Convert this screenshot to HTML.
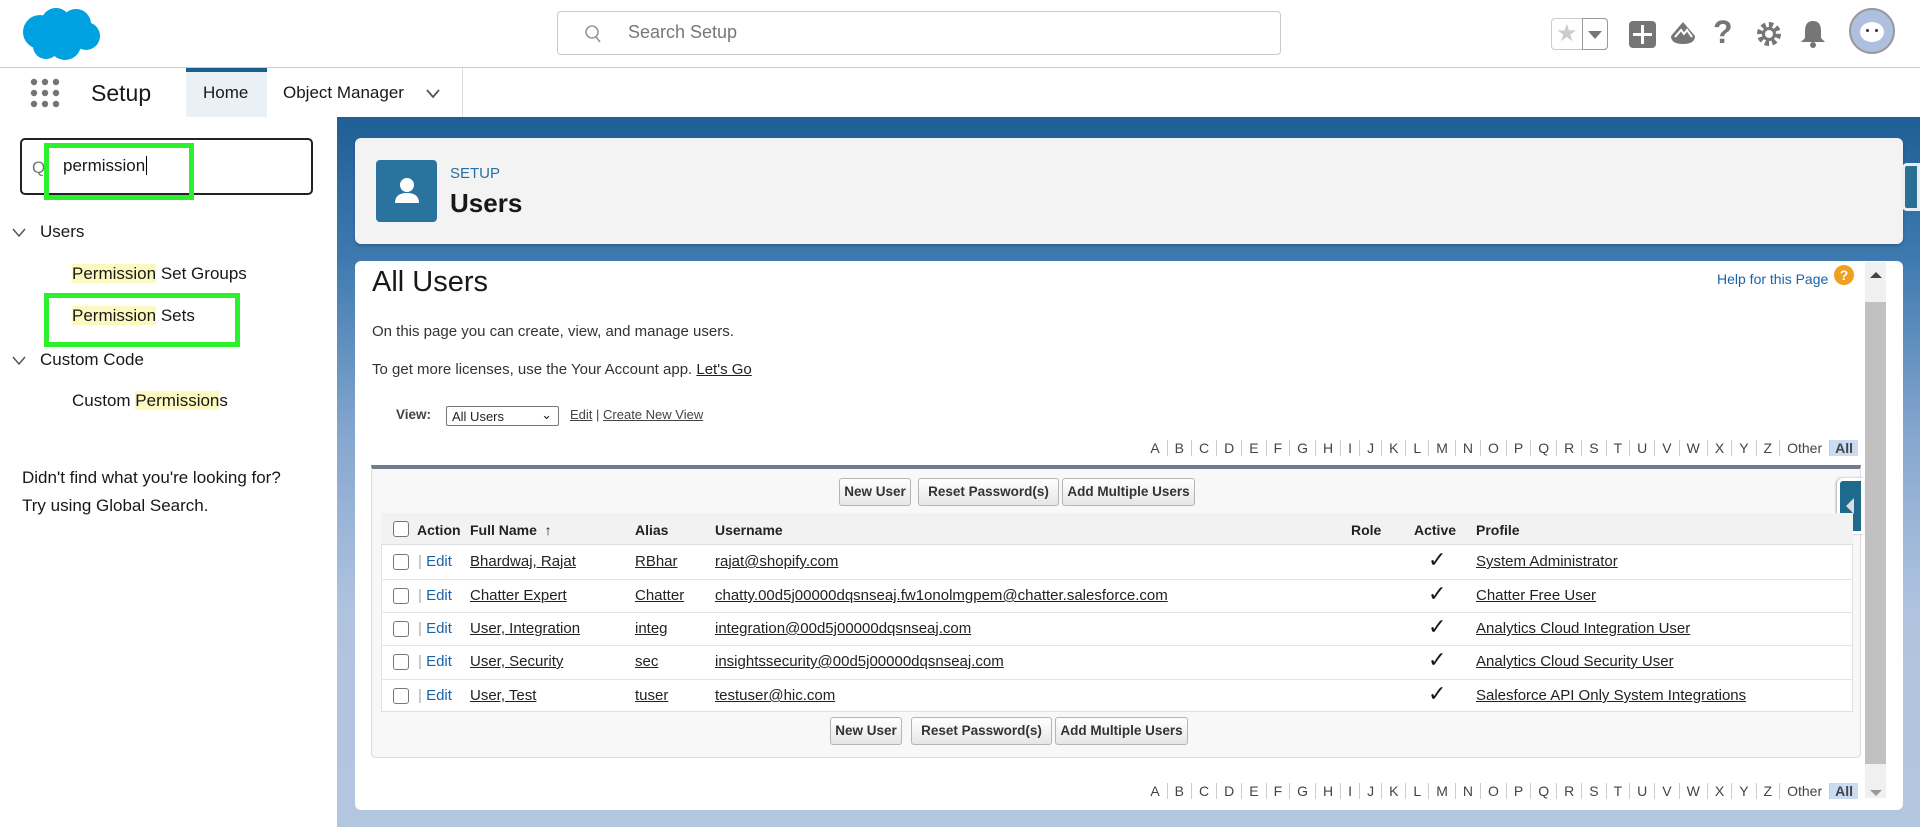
<!DOCTYPE html>
<html><head><meta charset="utf-8">
<style>
*{box-sizing:border-box;margin:0;padding:0}
body{width:1920px;height:827px;overflow:hidden;font-family:"Liberation Sans",Arial,sans-serif;background:#fff;position:relative;color:#181818}
.abs{position:absolute}
a{color:#222;text-decoration:underline}
.hl{background:#fcf9c0}
.bg{left:337px;top:117px;width:1583px;height:710px;background:linear-gradient(180deg,#1f5f96 0%,#3e7ab0 20%,#86a7cf 45%,#b0c4e0 70%,#b3c6e0 100%)}
.card{background:#fff;border-radius:6px}
.th{font-weight:bold;font-size:14px;color:#222}
.td{font-size:15px}
.btn{position:absolute;height:28px;border:1px solid #b5b5b5;border-radius:3px;background:linear-gradient(#fff,#e6e6e6);font-size:13.5px;font-weight:bold;color:#333;line-height:26px;text-align:center}
.cb{position:absolute;width:16px;height:16px;border:1px solid #777;border-radius:3px;background:#fff}
.alpha{font-size:14px;color:#444;white-space:nowrap}
.alpha span{padding:0 7px;border-right:1px solid #ccc}
.alpha span:last-child{border:none;padding:0 5px}
.edit{color:#1a62a8;text-decoration:none}
</style></head><body>
<svg class="abs" style="left:20px;top:6px" width="82" height="56" viewBox="0 0 82 56"><g fill="#00a1e0"><circle cx="20" cy="26" r="17"/><circle cx="36" cy="17" r="15"/><circle cx="56" cy="18" r="15"/><circle cx="66" cy="30" r="14"/><circle cx="45" cy="38" r="16"/><circle cx="26" cy="40" r="13"/></g></svg>
<div class="abs" style="left:557px;top:11px;width:724px;height:44px;border:1px solid #c9c9c9;border-radius:4px"></div>
<svg class="abs" style="left:584px;top:24px" width="18" height="20" viewBox="0 0 18 20"><circle cx="8" cy="8" r="6" fill="none" stroke="#999" stroke-width="1.6"/><line x1="12" y1="13" x2="16" y2="18" stroke="#999" stroke-width="1.8"/></svg>
<div class="abs" style="left:628px;top:22px;font-size:18px;color:#777">Search Setup</div>
<div class="abs" style="left:1551px;top:18px;width:57px;height:32px;border:1px solid #ccc;border-radius:4px"></div>
<div class="abs" style="left:1582px;top:18px;width:26px;height:32px;border:1px solid #999;border-radius:0 4px 4px 0"></div>
<div class="abs" style="left:1556px;top:19px;font-size:24px;color:#ccc">★</div>
<div class="abs" style="left:1588px;top:31px;width:0;height:0;border-left:7px solid transparent;border-right:7px solid transparent;border-top:8px solid #777"></div>
<div class="abs" style="left:1629px;top:21px;width:27px;height:27px;background:#767676;border-radius:4px"></div>
<div class="abs" style="left:1641px;top:25px;width:3px;height:19px;background:#fff"></div>
<div class="abs" style="left:1633px;top:33px;width:19px;height:3px;background:#fff"></div>
<svg class="abs" style="left:1669px;top:20px" width="28" height="28" viewBox="0 0 28 28"><path d="M14 2 L26 16 Q26 24 14 24 Q2 24 2 16 Z" fill="#767676"/><path d="M6 17 L12 10 L15 14 L18 10 L23 17" fill="none" stroke="#fff" stroke-width="2"/></svg>
<div class="abs" style="left:1713px;top:14px;font-size:32px;color:#767676;font-weight:bold">?</div>
<svg class="abs" style="left:1756px;top:21px" width="26" height="26" viewBox="0 0 26 26"><circle cx="13" cy="13" r="9" fill="none" stroke="#767676" stroke-width="6" stroke-dasharray="4 3"/><circle cx="13" cy="13" r="7" fill="#767676"/><circle cx="13" cy="13" r="4" fill="#fff"/></svg>
<svg class="abs" style="left:1799px;top:19px" width="28" height="30" viewBox="0 0 28 30"><path d="M14 2 Q6 2 6 12 L6 19 L2 23 L26 23 L22 19 L22 12 Q22 2 14 2Z" fill="#767676"/><circle cx="14" cy="26" r="3" fill="#767676"/></svg>
<div class="abs" style="left:1849px;top:8px;width:46px;height:46px;border-radius:50%;background:#aebfe0;border:2px solid #999"></div>
<div class="abs" style="left:1860px;top:22px;width:24px;height:20px;border-radius:50%;background:#fff"></div>
<div class="abs" style="left:1866px;top:29px;width:3px;height:3px;border-radius:50%;background:#333"></div>
<div class="abs" style="left:1875px;top:29px;width:3px;height:3px;border-radius:50%;background:#333"></div>
<div class="abs" style="left:0;top:67px;width:1920px;height:1px;background:#ccc"></div>
<svg class="abs" style="left:30px;top:78px" width="30" height="30"><g fill="#747474"><circle cx="4" cy="4" r="3.2"/><circle cx="15" cy="4" r="3.2"/><circle cx="26" cy="4" r="3.2"/><circle cx="4" cy="15" r="3.2"/><circle cx="15" cy="15" r="3.2"/><circle cx="26" cy="15" r="3.2"/><circle cx="4" cy="26" r="3.2"/><circle cx="15" cy="26" r="3.2"/><circle cx="26" cy="26" r="3.2"/></g></svg>
<div class="abs" style="left:91px;top:80px;font-size:23px;color:#181818">Setup</div>
<div class="abs" style="left:186px;top:68px;width:81px;height:49px;background:#eaf1f6;border-top:4px solid #1b5f8f"></div>
<div class="abs" style="left:203px;top:83px;font-size:17px">Home</div>
<div class="abs" style="left:283px;top:83px;font-size:17px">Object Manager</div>
<svg class="abs" style="left:425px;top:88px" width="16" height="12"><path d="M2 2 L8 9 L14 2" fill="none" stroke="#555" stroke-width="1.8"/></svg>
<div class="abs" style="left:462px;top:68px;width:1px;height:49px;background:#ddd"></div>
<div class="abs" style="left:20px;top:138px;width:293px;height:57px;border:2px solid #222;border-radius:5px"></div>
<div class="abs" style="left:32px;top:158px;font-size:17px;color:#777">Q</div>
<div class="abs" style="left:44px;top:143px;width:150px;height:57px;border:5px solid #2bf02b"></div>
<div class="abs" style="left:63px;top:156px;font-size:17px">permission<span style="border-left:1.5px solid #000;margin-left:1px"></span></div>
<svg class="abs" style="left:12px;top:228px" width="14" height="10"><path d="M1 1 L7 8 L13 1" fill="none" stroke="#555" stroke-width="1.5"/></svg>
<div class="abs" style="left:40px;top:222px;font-size:17px">Users</div>
<div class="abs" style="left:72px;top:264px;font-size:17px"><span class="hl">Permission</span> Set Groups</div>
<div class="abs" style="left:44px;top:293px;width:196px;height:54px;border:5px solid #2bf02b"></div>
<div class="abs" style="left:72px;top:306px;font-size:17px"><span class="hl">Permission</span> Sets</div>
<svg class="abs" style="left:12px;top:356px" width="14" height="10"><path d="M1 1 L7 8 L13 1" fill="none" stroke="#555" stroke-width="1.5"/></svg>
<div class="abs" style="left:40px;top:350px;font-size:17px">Custom Code</div>
<div class="abs" style="left:72px;top:391px;font-size:17px">Custom <span class="hl">Permission</span>s</div>
<div class="abs" style="left:22px;top:464px;font-size:17px;line-height:28px">Didn't find what you're looking for?<br>Try using Global Search.</div>
<div class="abs bg"></div>
<div class="abs card" style="left:355px;top:138px;width:1548px;height:106px;background:#f3f3f3;box-shadow:0 2px 3px rgba(0,0,0,.2)"></div>
<div class="abs" style="left:376px;top:160px;width:61px;height:62px;background:#2a739e;border-radius:4px"></div>
<svg class="abs" style="left:393px;top:176px" width="28" height="30"><circle cx="14" cy="9" r="7" fill="#fff"/><path d="M2 27 Q2 17 14 17 Q26 17 26 27Z" fill="#fff"/></svg>
<div class="abs" style="left:450px;top:165px;font-size:15px;color:#2a6fa0">SETUP</div>
<div class="abs" style="left:450px;top:188px;font-size:26px;font-weight:bold">Users</div>
<div class="abs" style="left:1902px;top:163px;width:18px;height:48px;background:#2a6f94;border:3px solid #e8eef3;border-radius:5px 0 0 5px"></div>
<div class="abs card" style="left:355px;top:261px;width:1548px;height:549px"></div>
<div class="abs" style="left:372px;top:266px;font-size:29px">All Users</div>
<div class="abs" style="left:1717px;top:271px;font-size:14px;color:#1a62a8">Help for this Page</div>
<div class="abs" style="left:1834px;top:265px;width:20px;height:20px;border-radius:50%;background:#f0a020;color:#fff;font-size:14px;font-weight:bold;text-align:center;line-height:20px">?</div>
<div class="abs" style="left:1865px;top:262px;width:21px;height:536px;background:#f0f0f0"></div>
<div class="abs" style="left:1865px;top:302px;width:21px;height:462px;background:#c1c1c1"></div>
<div class="abs" style="left:1870px;top:272px;border-left:6px solid transparent;border-right:6px solid transparent;border-bottom:6px solid #444"></div>
<div class="abs" style="left:1870px;top:790px;border-left:6px solid transparent;border-right:6px solid transparent;border-top:6px solid #999"></div>
<div class="abs" style="left:372px;top:323px;font-size:15px;color:#333">On this page you can create, view, and manage users.</div>
<div class="abs" style="left:372px;top:361px;font-size:15px;color:#333">To get more licenses, use the Your Account app. <a>Let's Go</a></div>
<div class="abs" style="left:396px;top:407px;font-size:13.5px;font-weight:bold;color:#444">View:</div>
<div class="abs" style="left:446px;top:406px;width:113px;height:20px;border:1px solid #777;border-radius:2px;font-size:13px;padding:2px 5px;color:#222">All Users<span style="position:absolute;right:6px;top:0">⌄</span></div>
<div class="abs" style="left:570px;top:407px;font-size:13px;color:#444"><a style="color:#444">Edit</a> | <a style="color:#444">Create New View</a></div>
<div class="abs alpha" style="right:62px;top:440px"><span>A</span><span>B</span><span>C</span><span>D</span><span>E</span><span>F</span><span>G</span><span>H</span><span>I</span><span>J</span><span>K</span><span>L</span><span>M</span><span>N</span><span>O</span><span>P</span><span>Q</span><span>R</span><span>S</span><span>T</span><span>U</span><span>V</span><span>W</span><span>X</span><span>Y</span><span>Z</span><span>Other</span><span style="background:#c9dcf2;font-weight:bold">All</span></div>
<div class="abs" style="left:371px;top:465px;width:1490px;height:293px;background:#f8f8f8;border:1px solid #ddd;border-top:4px solid #6f7e8f;border-radius:0 0 4px 4px"></div>
<div class="abs" style="left:1837px;top:478px;width:27px;height:56px;background:#1d6a8d;border:3px solid #fff;border-radius:6px 0 0 6px;box-shadow:-1px 0 2px #aaa"></div>
<div class="abs" style="left:1846px;top:498px;border-top:8px solid transparent;border-bottom:8px solid transparent;border-right:8px solid #ddd"></div>
<div class="btn" style="left:839px;top:478px;width:72px">New User</div>
<div class="btn" style="left:918px;top:478px;width:141px">Reset Password(s)</div>
<div class="btn" style="left:1062px;top:478px;width:133px">Add Multiple Users</div>
<div class="abs" style="left:381px;top:513px;width:1472px;height:199px;background:#fff;border:1px solid #e0e0e0"></div>
<div class="abs" style="left:381px;top:513px;width:1472px;height:32px;background:#f2f2f2;border-bottom:1px solid #ddd"></div>
<div class="cb" style="left:393px;top:521px"></div>
<div class="abs th" style="left:417px;top:522px">Action</div>
<div class="abs th" style="left:470px;top:522px">Full Name &nbsp;↑</div>
<div class="abs th" style="left:635px;top:522px">Alias</div>
<div class="abs th" style="left:715px;top:522px">Username</div>
<div class="abs th" style="left:1351px;top:522px">Role</div>
<div class="abs th" style="left:1414px;top:522px">Active</div>
<div class="abs th" style="left:1476px;top:522px">Profile</div>
<div class="abs" style="left:381px;top:579px;width:1472px;height:1px;background:#e5e5e5"></div>
<div class="abs" style="left:381px;top:612px;width:1472px;height:1px;background:#e5e5e5"></div>
<div class="abs" style="left:381px;top:645px;width:1472px;height:1px;background:#e5e5e5"></div>
<div class="abs" style="left:381px;top:679px;width:1472px;height:1px;background:#e5e5e5"></div>

<div class="cb" style="left:393px;top:554px"></div><div class="abs td" style="left:418px;top:553px;color:#aaa">| <span class="edit">Edit</span></div><div class="abs td" style="left:470px;top:553px"><a>Bhardwaj, Rajat</a></div><div class="abs td" style="left:635px;top:553px"><a>RBhar</a></div><div class="abs td" style="left:715px;top:553px"><a>rajat@shopify.com</a></div><div class="abs" style="left:1428px;top:547px;font-size:22px">✓</div><div class="abs td" style="left:1476px;top:553px"><a>System Administrator</a></div>
<div class="cb" style="left:393px;top:588px"></div><div class="abs td" style="left:418px;top:587px;color:#aaa">| <span class="edit">Edit</span></div><div class="abs td" style="left:470px;top:587px"><a>Chatter Expert</a></div><div class="abs td" style="left:635px;top:587px"><a>Chatter</a></div><div class="abs td" style="left:715px;top:587px"><a>chatty.00d5j00000dqsnseaj.fw1onolmgpem@chatter.salesforce.com</a></div><div class="abs" style="left:1428px;top:581px;font-size:22px">✓</div><div class="abs td" style="left:1476px;top:587px"><a>Chatter Free User</a></div>
<div class="cb" style="left:393px;top:621px"></div><div class="abs td" style="left:418px;top:620px;color:#aaa">| <span class="edit">Edit</span></div><div class="abs td" style="left:470px;top:620px"><a>User, Integration</a></div><div class="abs td" style="left:635px;top:620px"><a>integ</a></div><div class="abs td" style="left:715px;top:620px"><a>integration@00d5j00000dqsnseaj.com</a></div><div class="abs" style="left:1428px;top:614px;font-size:22px">✓</div><div class="abs td" style="left:1476px;top:620px"><a>Analytics Cloud Integration User</a></div>
<div class="cb" style="left:393px;top:654px"></div><div class="abs td" style="left:418px;top:653px;color:#aaa">| <span class="edit">Edit</span></div><div class="abs td" style="left:470px;top:653px"><a>User, Security</a></div><div class="abs td" style="left:635px;top:653px"><a>sec</a></div><div class="abs td" style="left:715px;top:653px"><a>insightssecurity@00d5j00000dqsnseaj.com</a></div><div class="abs" style="left:1428px;top:647px;font-size:22px">✓</div><div class="abs td" style="left:1476px;top:653px"><a>Analytics Cloud Security User</a></div>
<div class="cb" style="left:393px;top:688px"></div><div class="abs td" style="left:418px;top:687px;color:#aaa">| <span class="edit">Edit</span></div><div class="abs td" style="left:470px;top:687px"><a>User, Test</a></div><div class="abs td" style="left:635px;top:687px"><a>tuser</a></div><div class="abs td" style="left:715px;top:687px"><a>testuser@hic.com</a></div><div class="abs" style="left:1428px;top:681px;font-size:22px">✓</div><div class="abs td" style="left:1476px;top:687px"><a>Salesforce API Only System Integrations</a></div>

<div class="btn" style="left:830px;top:717px;width:72px">New User</div>
<div class="btn" style="left:911px;top:717px;width:141px">Reset Password(s)</div>
<div class="btn" style="left:1055px;top:717px;width:133px">Add Multiple Users</div>
<div class="abs alpha" style="right:62px;top:783px"><span>A</span><span>B</span><span>C</span><span>D</span><span>E</span><span>F</span><span>G</span><span>H</span><span>I</span><span>J</span><span>K</span><span>L</span><span>M</span><span>N</span><span>O</span><span>P</span><span>Q</span><span>R</span><span>S</span><span>T</span><span>U</span><span>V</span><span>W</span><span>X</span><span>Y</span><span>Z</span><span>Other</span><span style="background:#c9dcf2;font-weight:bold">All</span></div>
</body></html>
